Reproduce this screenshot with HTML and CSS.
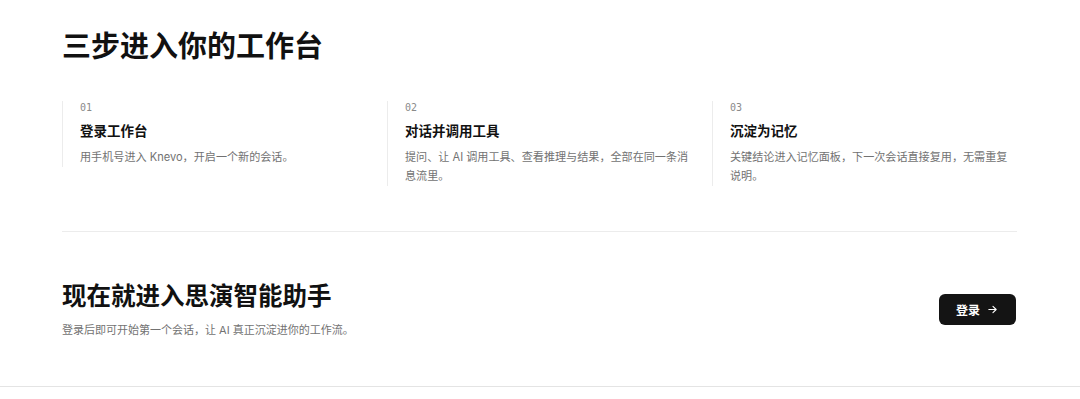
FILE: index.html
```html
<!DOCTYPE html>
<html lang="zh-CN">
<head>
<meta charset="utf-8">
<title>三步进入你的工作台</title>
<link rel="stylesheet" href="styles.css">
</head>
<body>
<main class="page">
  <section class="steps-section">
    <h2 class="section-title">三步进入你的工作台</h2>
    <ol class="steps">
      <li class="step">
        <span class="step-num">01</span>
        <h3 class="step-title">登录工作台</h3>
        <p class="step-desc">用手机号进入 Knevo，开启一个新的会话。</p>
      </li>
      <li class="step">
        <span class="step-num">02</span>
        <h3 class="step-title">对话并调用工具</h3>
        <p class="step-desc">提问、让 AI 调用工具、查看推理与结果，全部在同一条消息流里。</p>
      </li>
      <li class="step">
        <span class="step-num">03</span>
        <h3 class="step-title">沉淀为记忆</h3>
        <p class="step-desc">关键结论进入记忆面板，下一次会话直接复用，无需重复说明。</p>
      </li>
    </ol>
  </section>
  <section class="cta">
    <div class="cta-text">
      <h2 class="cta-title">现在就进入思演智能助手</h2>
      <p class="cta-sub">登录后即可开始第一个会话，让 AI 真正沉淀进你的工作流。</p>
    </div>
    <a class="cta-btn" href="#">登录
      <svg class="arrow" viewBox="0 0 12 12" width="11" height="11" aria-hidden="true"><path d="M2 6h8M6.5 2.5L10 6l-3.5 3.5" fill="none" stroke="currentColor" stroke-width="1.2" stroke-linecap="round" stroke-linejoin="round"/></svg>
    </a>
  </section>
</main>
<footer class="footer"></footer>
</body>
</html>
```

FILE: styles.css
```css
* { box-sizing: border-box; }
html, body { margin: 0; padding: 0; background: #fff; }
body {
  font-family: Inter, "Noto Sans CJK SC", sans-serif;
  color: #111;
}
.page {
  width: 955px;
  margin-left: 62px;
}
.steps-section {
  padding-top: 29px;
  padding-bottom: 45px;
  border-bottom: 1px solid #ececec;
}
.section-title {
  margin: 0;
  font-size: 29px;
  line-height: 36px;
  font-weight: 700;
}
.steps {
  list-style: none;
  margin: 36px 0 0;
  padding: 0;
  display: grid;
  grid-template-columns: repeat(3, 1fr);
  column-gap: 20px;
  align-items: start;
}
.step {
  border-left: 1px solid #ececec;
  padding-left: 17px;
  padding-right: 2px;
}
.step-num {
  display: block;
  font-family: "DejaVu Sans Mono", monospace;
  font-size: 10px;
  line-height: 14px;
  color: #8a8a8a;
}
.step-title {
  margin: 6px 0 0;
  font-size: 13.5px;
  line-height: 20px;
  font-weight: 700;
  color: #111;
}
.step-desc {
  margin: 7px 0 0;
  font-size: 11.1px;
  line-height: 19px;
  color: #727272;
}
.cta {
  display: flex;
  align-items: center;
  justify-content: space-between;
  padding: 48px 1px 47px 0;
}
.cta-title {
  margin: 0;
  font-size: 24.5px;
  line-height: 32px;
  font-weight: 700;
}
.cta-sub {
  margin: 9px 0 0;
  font-size: 11px;
  line-height: 18px;
  color: #727272;
}
.cta-btn {
  display: flex;
  align-items: center;
  gap: 7px;
  height: 31px;
  padding: 0 18px 0 17px;
  background: #141414;
  color: #fff;
  border-radius: 6px;
  font-size: 12px;
  font-weight: 700;
  text-decoration: none;
}
.arrow { display: block; }
.footer {
  border-top: 1px solid #e4e4e4;
  height: 13px;
}
```
